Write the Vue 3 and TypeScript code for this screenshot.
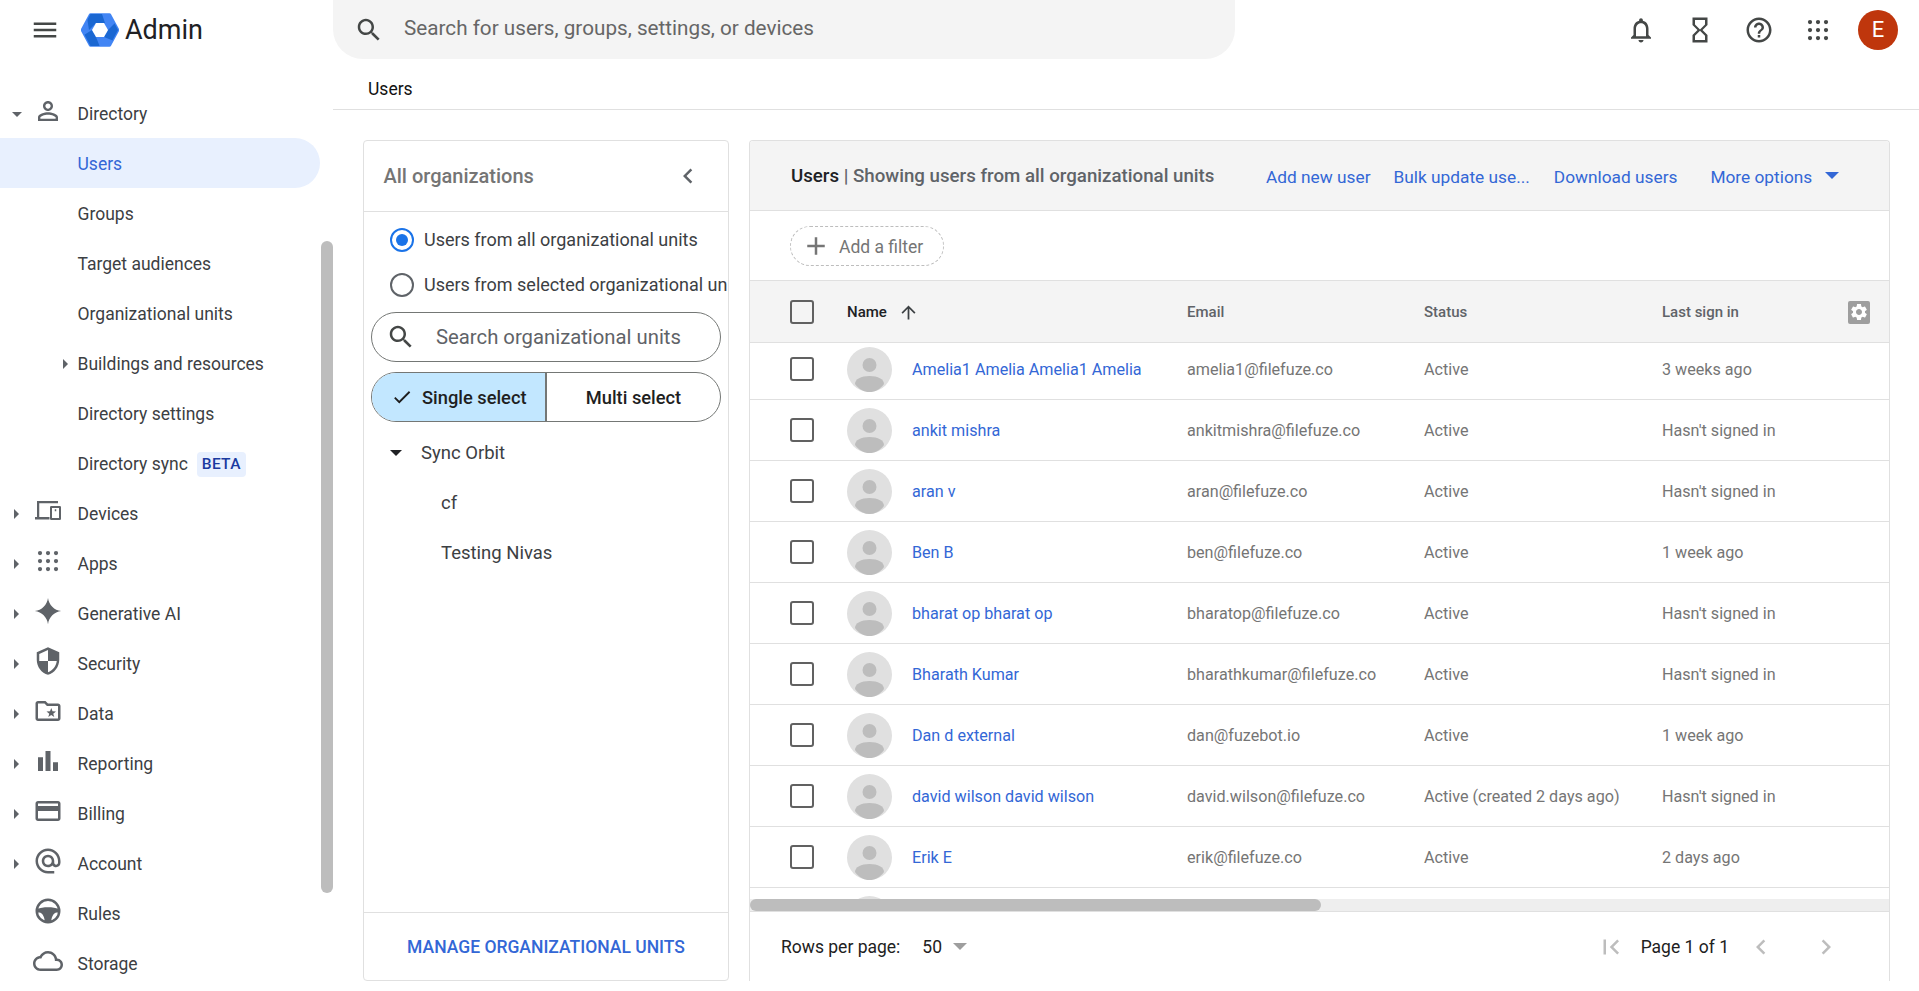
<script setup lang="ts">
const dot = (x: number, y: number, r: number) =>
  `M${x - r} ${y}a${r} ${r} 0 1 1 ${2 * r} 0a${r} ${r} 0 1 1 ${-2 * r} 0Z`
const dots = [5.6, 12, 18.4]
  .flatMap((y) => [5.6, 12, 18.4].map((x) => dot(x, y, 1.7)))
  .join('')

const paths: Record<string, string> = {
  menu: 'M3 18h18v-2H3v2zm0-5h18v-2H3v2zm0-7v2h18V6H3z',
  search:
    'M15.5 14h-.79l-.28-.27C15.41 12.59 16 11.11 16 9.5 16 5.91 13.09 3 9.5 3S3 5.91 3 9.5 5.91 16 9.5 16c1.61 0 3.09-.59 4.23-1.57l.27.28v.79l5 4.99L20.49 19l-4.99-5zm-6 0C7.01 14 5 11.99 5 9.5S7.01 5 9.5 5 14 7.01 14 9.5 11.99 14 9.5 14z',
  bell: 'M12 22c1.1 0 2-.9 2-2h-4c0 1.1.9 2 2 2zm6-6v-5c0-3.07-1.63-5.64-4.5-6.32V4c0-.83-.67-1.5-1.5-1.5s-1.5.67-1.5 1.5v.68C7.64 5.36 6 7.92 6 11v5l-2 2v1h16v-1l-2-2zm-2 1H8v-6c0-2.48 1.51-4.5 4-4.5s4 2.02 4 4.5v6z',
  hourglass:
    'M6 2v6h.01L6 8.01 10 12l-4 4 .01.01H6V22h12v-5.99h-.01L18 16l-4-4 4-3.99-.01-.01H18V2H6zm10 14.5V20H8v-3.5l4-4 4 4zm-4-5l-4-4V4h8v3.5l-4 4z',
  help: 'M11 18h2v-2h-2v2zm1-16C6.48 2 2 6.48 2 12s4.48 10 10 10 10-4.48 10-10S17.52 2 12 2zm0 18c-4.41 0-8-3.59-8-8s3.59-8 8-8 8 3.59 8 8-3.59 8-8 8zm0-14c-2.21 0-4 1.79-4 4h2c0-1.1.9-2 2-2s2 .9 2 2c0 2-3 1.75-3 5h2c0-2.25 3-2.5 3-5 0-2.21-1.79-4-4-4z',
  apps: dots,
  person:
    'M12 5.9c1.16 0 2.1.94 2.1 2.1s-.94 2.1-2.1 2.1S9.9 9.16 9.9 8s.94-2.1 2.1-2.1m0 9c2.97 0 6.1 1.46 6.1 2.1v1.1H5.9V17c0-.64 3.13-2.1 6.1-2.1M12 4C9.79 4 8 5.79 8 8s1.79 4 4 4 4-1.79 4-4-1.79-4-4-4zm0 9c-2.67 0-8 1.34-8 4v3h16v-3c0-2.66-5.33-4-8-4z',
  devices:
    'M3.2 4H20V5.8H5V16.8H13.2V18.8H1.6V16.8H3.2Z M14.6 8H21.4a1 1 0 0 1 1 1V18.2a1 1 0 0 1-1 1H14.6a1 1 0 0 1-1-1V9a1 1 0 0 1 1-1Z M15.2 9.6V17.6H20.8V9.6Z M17.4 10.6h1.2v1.5h-1.2Z',
  spark: 'M12 1.5C12.7 7 17 11.3 22.5 12 17 12.7 12.7 17 12 22.5 11.3 17 7 12.7 1.5 12 7 11.3 11.3 7 12 1.5Z',
  shield:
    'M12 1L3 5v6c0 5.55 3.84 10.74 9 12 5.16-1.26 9-6.45 9-12V5l-9-4zm0 10.99h7c-.53 4.12-3.28 7.79-7 8.94V12H5V6.3l7-3.11v8.8z',
  folder:
    'M20 6h-8l-2-2H4c-1.1 0-1.99.9-1.99 2L2 18c0 1.1.9 2 2 2h16c1.1 0 2-.9 2-2V8c0-1.1-.9-2-2-2zm0 12H4V6h5.17l2 2H20v10z M14.6 9.6l1 2.6 2.8.1-2.2 1.8.8 2.7-2.4-1.6-2.4 1.6.8-2.7-2.2-1.8 2.8-.1z',
  chart: 'M4 9h4v11H4zM10 4h4v16h-4zm6 9h4v7h-4z',
  card: 'M20 4H4c-1.11 0-1.99.89-1.99 2L2 18c0 1.11.89 2 2 2h16c1.11 0 2-.89 2-2V6c0-1.11-.89-2-2-2zm0 14H4v-6h16v6zm0-10H4V6h16v2z',
  at: 'M12 2C6.48 2 2 6.48 2 12s4.48 10 10 10h5v-2h-5c-4.34 0-8-3.66-8-8s3.66-8 8-8 8 3.66 8 8v1.43c0 .79-.71 1.57-1.5 1.57s-1.5-.78-1.5-1.57V12c0-2.76-2.24-5-5-5s-5 2.24-5 5 2.24 5 5 5c1.38 0 2.64-.56 3.54-1.47.65.89 1.77 1.47 2.96 1.47 1.97 0 3.5-1.6 3.5-3.57V12c0-5.52-4.48-10-10-10zm0 13c-1.66 0-3-1.34-3-3s1.34-3 3-3 3 1.34 3 3-1.34 3-3 3z',
  wheel:
    'M12 2a10 10 0 1 1 0 20a10 10 0 1 1 0-20Z M12 4a8 8 0 1 0 0 16a8 8 0 1 0 0-16Z M3.8 10.4C7 8.4 17 8.4 20.2 10.4V13C17 13 15 15.5 14.5 20.5H9.5C9 15.5 7 13 3.8 13Z',
  cloud:
    'M19.35 10.04C18.67 6.59 15.64 4 12 4 9.11 4 6.6 5.64 5.35 8.04 2.34 8.36 0 10.91 0 14c0 3.31 2.69 6 6 6h13c2.76 0 5-2.24 5-5 0-2.64-2.05-4.78-4.65-4.96zM19 18H6c-2.21 0-4-1.79-4-4s1.79-4 4-4h.71C7.37 7.69 9.48 6 12 6c3.04 0 5.5 2.46 5.5 5.5v.5H19c1.66 0 3 1.34 3 3s-1.34 3-3 3z',
  back: 'M15.41 7.41L14 6l-6 6 6 6 1.41-1.41L10.83 12z',
  forward: 'M8.59 16.59L13.17 12 8.59 7.41 10 6l6 6-6 6z',
  first: 'M18.41 16.59L13.82 12l4.59-4.59L17 6l-6 6 6 6zM6 6h2v12H6z',
  plus: 'M19 13h-6v6h-2v-6H5v-2h6V5h2v6h6v2z',
  up: 'M4 12l1.41 1.41L11 7.83V20h2V7.83l5.58 5.59L20 12l-8-8-8 8z',
  check: 'M9 16.17L4.83 12l-1.42 1.41L9 19 21 7l-1.41-1.41z',
  gear: 'M19.14 12.94c.04-.3.06-.61.06-.94 0-.32-.02-.64-.07-.94l2.03-1.58c.18-.14.23-.41.12-.61l-1.92-3.32c-.12-.22-.37-.29-.59-.22l-2.39.96c-.5-.38-1.03-.7-1.62-.94l-.36-2.54c-.04-.24-.24-.41-.48-.41h-3.84c-.24 0-.43.17-.47.41l-.36 2.54c-.59.24-1.13.57-1.62.94l-2.39-.96c-.22-.08-.47 0-.59.22L2.74 8.87c-.12.21-.08.47.12.61l2.03 1.58c-.05.3-.09.63-.09.94s.02.64.07.94l-2.03 1.58c-.18.14-.23.41-.12.61l1.92 3.32c.12.22.37.29.59.22l2.39-.96c.5.38 1.03.7 1.62.94l.36 2.54c.05.24.24.41.48.41h3.84c.24 0 .44-.17.47-.41l.36-2.54c.59-.24 1.13-.56 1.62-.94l2.39.96c.22.08.47 0 .59-.22l1.92-3.32c.12-.22.07-.47-.12-.61l-2.01-1.58zM12 15.6c-1.98 0-3.6-1.62-3.6-3.6s1.62-3.6 3.6-3.6 3.6 1.62 3.6 3.6-1.62 3.6-3.6 3.6z',
}

const subItems = [
  { label: 'Users', active: true },
  { label: 'Groups' },
  { label: 'Target audiences' },
  { label: 'Organizational units' },
  { label: 'Buildings and resources', caret: true },
  { label: 'Directory settings' },
  { label: 'Directory sync', beta: true },
]

const navItems = [
  { label: 'Devices', icon: 'devices', caret: true },
  { label: 'Apps', icon: 'apps', caret: true },
  { label: 'Generative AI', icon: 'spark', caret: true },
  { label: 'Security', icon: 'shield', caret: true },
  { label: 'Data', icon: 'folder', caret: true },
  { label: 'Reporting', icon: 'chart', caret: true },
  { label: 'Billing', icon: 'card', caret: true },
  { label: 'Account', icon: 'at', caret: true },
  { label: 'Rules', icon: 'wheel', caret: false },
  { label: 'Storage', icon: 'cloud', caret: false },
]

const users = [
  ['Amelia1 Amelia Amelia1 Amelia', 'amelia1@filefuze.co', 'Active', '3 weeks ago'],
  ['ankit mishra', 'ankitmishra@filefuze.co', 'Active', "Hasn't signed in"],
  ['aran v', 'aran@filefuze.co', 'Active', "Hasn't signed in"],
  ['Ben B', 'ben@filefuze.co', 'Active', '1 week ago'],
  ['bharat op bharat op', 'bharatop@filefuze.co', 'Active', "Hasn't signed in"],
  ['Bharath Kumar', 'bharathkumar@filefuze.co', 'Active', "Hasn't signed in"],
  ['Dan d external', 'dan@fuzebot.io', 'Active', '1 week ago'],
  ['david wilson david wilson', 'david.wilson@filefuze.co', 'Active (created 2 days ago)', "Hasn't signed in"],
  ['Erik E', 'erik@filefuze.co', 'Active', '2 days ago'],
  ['', '', '', ''],
]
</script>

<template>
  <div class="app">
    <header class="topbar">
      <div class="brand">
        <svg class="icon menu-icon" viewBox="0 0 24 24"><path :d="paths.menu" /></svg>
        <svg class="logo" viewBox="0 0 38 34">
          <defs>
            <clipPath id="hex"><path d="M9.5 1H28.5L37 17L28.5 33H9.5L1 17Z" stroke-linejoin="round" /></clipPath>
          </defs>
          <path d="M9.5 2H28.5L36.5 17L28.5 32H9.5L1.5 17Z" fill="#4285f4" stroke="#4285f4" stroke-width="3.5" stroke-linejoin="round" />
          <g clip-path="url(#hex)" fill="#1a67d2">
            <path d="M5 -2H20L24 10H15L8 17Z" />
            <path d="M38 6L40 17L33 28L23 24L27 17Z" />
            <path d="M0 24L11 17L15 24L19 34L9 36Z" />
          </g>
          <path d="M15 10H23L27 17L23 24H15L11 17Z" fill="#fff" />
        </svg>
        <span class="admin">Admin</span>
      </div>
      <div class="search">
        <svg class="icon search-icon" viewBox="0 0 24 24"><path :d="paths.search" /></svg>
        <span>Search for users, groups, settings, or devices</span>
      </div>
      <div class="top-actions">
        <svg class="icon" viewBox="0 0 24 24"><path :d="paths.bell" /></svg>
        <svg class="icon" viewBox="0 0 24 24"><path :d="paths.hourglass" /></svg>
        <svg class="icon" viewBox="0 0 24 24"><path :d="paths.help" /></svg>
        <svg class="icon" viewBox="0 0 24 24"><path :d="paths.apps" /></svg>
        <div class="account">E</div>
      </div>
    </header>

    <div class="body">
      <aside class="sidebar">
        <nav class="nav">
          <div class="nav-row">
            <span class="caret-slot"><i class="tri-down"></i></span>
            <svg class="nav-icon" viewBox="0 0 24 24"><path :d="paths.person" /></svg>
            <span>Directory</span>
          </div>
          <div
            v-for="item in subItems"
            :key="item.label"
            class="nav-row sub"
            :class="{ active: item.active }"
          >
            <span class="sub-slot"><i v-if="item.caret" class="tri-right"></i></span>
            <span>{{ item.label }}</span>
            <span v-if="item.beta" class="beta">BETA</span>
          </div>
          <div v-for="item in navItems" :key="item.label" class="nav-row">
            <span class="caret-slot"><i v-if="item.caret" class="tri-right"></i></span>
            <svg class="nav-icon" viewBox="0 0 24 24"><path :d="paths[item.icon]" /></svg>
            <span>{{ item.label }}</span>
          </div>
        </nav>
        <div class="side-scroll"></div>
      </aside>

      <main class="main">
        <div class="crumb">Users</div>
        <div class="content">
          <section class="org">
            <div class="org-head">
              <span>All organizations</span>
              <svg class="icon chevron" viewBox="0 0 24 24"><path :d="paths.back" /></svg>
            </div>
            <div class="org-body">
              <label class="radio-row first">
                <span class="radio on"></span>
                <span>Users from all organizational units</span>
              </label>
              <label class="radio-row">
                <span class="radio"></span>
                <span>Users from selected organizational units</span>
              </label>
              <div class="org-search">
                <svg class="icon" viewBox="0 0 24 24"><path :d="paths.search" /></svg>
                <span>Search organizational units</span>
              </div>
              <div class="toggle">
                <div class="toggle-on">
                  <svg class="check" viewBox="0 0 24 24"><path :d="paths.check" /></svg>
                  <span>Single select</span>
                </div>
                <div class="toggle-off">Multi select</div>
              </div>
              <div class="tree-row root"><i class="tri-down dark"></i><span>Sync Orbit</span></div>
              <div class="tree-row">cf</div>
              <div class="tree-row">Testing Nivas</div>
            </div>
            <div class="org-foot">MANAGE ORGANIZATIONAL UNITS</div>
          </section>

          <section class="panel">
            <div class="panel-head">
              <div class="panel-title"><b>Users</b> | Showing users from all organizational units</div>
              <a class="link l-add">Add new user</a>
              <a class="link l-bulk">Bulk update use...</a>
              <a class="link l-down">Download users</a>
              <a class="link l-more">More options</a>
              <i class="tri-blue"></i>
            </div>
            <div class="filter-bar">
              <div class="chip">
                <svg class="icon" viewBox="0 0 24 24"><path :d="paths.plus" /></svg>
                <span class="chip-text">Add a filter</span>
              </div>
            </div>
            <div class="table-grid table-head">
              <div class="cb-cell"><span class="cb"></span></div>
              <div class="name-head">
                <span class="strong">Name</span>
                <svg class="sort" viewBox="0 0 24 24"><path :d="paths.up" /></svg>
              </div>
              <div>Email</div>
              <div>Status</div>
              <div class="last-head">
                <span>Last sign in</span>
                <span class="gear"><svg viewBox="0 0 24 24"><path :d="paths.gear" /></svg></span>
              </div>
            </div>
            <div class="table-body">
              <div class="rows">
                <div v-for="(u, i) in users" :key="i" class="table-grid row">
                  <div class="cb-cell"><span class="cb"></span></div>
                  <svg class="avatar" viewBox="0 0 45 45">
                    <circle cx="22.5" cy="22.5" r="22.5" fill="#e0e0e0" />
                    <circle cx="22.5" cy="18" r="7" fill="#bdbdbd" />
                    <path d="M8 37C8 32 14 29 22.5 29S37 32 37 37C33 42.5 28 45 22.5 45S12 42.5 8 37Z" fill="#bdbdbd" />
                  </svg>
                  <a class="name">{{ u[0] }}</a>
                  <div>{{ u[1] }}</div>
                  <div>{{ u[2] }}</div>
                  <div>{{ u[3] }}</div>
                </div>
              </div>
            </div>
            <div class="hscroll"><div class="hthumb"></div></div>
            <div class="pager">
              <span>Rows per page:</span>
              <span class="rows-num">50</span>
              <i class="tri-grey"></i>
              <svg class="icon pg pg-first" viewBox="0 0 24 24"><path :d="paths.first" /></svg>
              <span class="page-text">Page 1 of 1</span>
              <svg class="icon pg pg-prev" viewBox="0 0 24 24"><path :d="paths.back" /></svg>
              <svg class="icon pg pg-next" viewBox="0 0 24 24"><path :d="paths.forward" /></svg>
            </div>
          </section>
        </div>
      </main>
    </div>
  </div>
</template>

<style>
html, body { margin: 0; overflow: hidden; background: #fff; }
</style>

<style scoped>
.app {
  width: 1919px;
  height: 991px;
  display: flex;
  flex-direction: column;
  overflow: hidden;
  font-family: Roboto, "Liberation Sans", sans-serif;
  font-size: 17.5px;
  color: #3c4043;
  background: #fff;
}
i { display: block; font-style: normal; }
.icon { width: 30px; height: 30px; flex: none; fill: #444746; display: block; }

/* top bar */
.topbar { height: 59px; flex: none; display: flex; align-items: center; }
.brand { width: 333px; flex: none; display: flex; align-items: center; padding-left: 30px; box-sizing: border-box; }
.logo { width: 38px; height: 34px; margin-left: 21px; flex: none; }
.admin { font-size: 27px; color: #202124; margin-left: 6px; }
.search {
  width: 902px; height: 59px; flex: none; background: #f4f4f4;
  border-radius: 0 0 30px 30px; display: flex; align-items: center; gap: 20px;
  padding: 0 0 3px 21px; box-sizing: border-box; color: #666; font-size: 20.7px;
}
.search-icon { margin-top: 3px; }
.top-actions { margin-left: auto; display: flex; align-items: center; gap: 29px; padding-right: 21px; }
.account {
  width: 40px; height: 40px; border-radius: 50%; background: #bf360c; color: #fff;
  display: flex; align-items: center; justify-content: center; font-size: 22px; margin-left: -4px;
}

/* sidebar */
.body { flex: 1; display: flex; min-height: 0; }
.sidebar { width: 333px; flex: none; display: flex; }
.nav { width: 321px; flex: none; padding-top: 29px; }
.nav-row { height: 50px; box-sizing: border-box; padding-top: 2px; display: flex; align-items: center; white-space: nowrap; }
.caret-slot { width: 33px; display: flex; justify-content: center; flex: none; }
.nav-icon { width: 30px; height: 30px; flex: none; fill: #5f6368; margin: 0 14.5px 6px 0; display: block; }
.sub-slot { width: 77.5px; flex: none; display: flex; justify-content: flex-end; padding-right: 9.5px; box-sizing: border-box; }
.sub.active { background: #e8f0fe; color: #3367d6; border-radius: 0 25px 25px 0; width: 320px; }
.beta {
  margin-left: 9px; background: #e8f0fe; color: #1a3aa0; font-size: 15.5px; font-weight: 500;
  padding: 3px 5px; border-radius: 4px; letter-spacing: .3px; line-height: 19px;
}
.tri-right { width: 0; height: 0; border: 5px solid transparent; border-left-color: #5f6368; border-right: 0; }
.tri-down { width: 0; height: 0; border: 5px solid transparent; border-top-color: #5f6368; border-bottom: 0; }
.tri-down.dark { border-top-color: #202124; border-width: 6px 6px 0; }
.side-scroll { width: 12px; height: 652px; margin-top: 182px; background: #bdbdbd; border-radius: 6px; flex: none; }

/* main */
.main { flex: 1; min-width: 0; display: flex; flex-direction: column; }
.crumb {
  height: 40px; padding: 10px 0 0 35px; flex: none; border-bottom: 1px solid #e0e0e0;
  display: flex; align-items: center; color: #111;
}
.content { height: 841px; margin-top: 30px; flex: none; display: flex; gap: 20px; padding: 0 29px 0 30px; }

.org {
  width: 366px; flex: none; box-sizing: border-box; border: 1px solid #e0e0e0; border-radius: 4px;
  display: flex; flex-direction: column; overflow: hidden;
}
.org-head {
  height: 71px; flex: none; box-sizing: border-box; border-bottom: 1px solid #e0e0e0;
  display: flex; align-items: center; justify-content: space-between; padding: 0 25px 0 19.5px;
  font-size: 20px; font-weight: 500; color: #757575;
}
.chevron { fill: #5f6368; }
.org-body { flex: 1; min-height: 0; white-space: nowrap; padding-left: 7px; }
.radio-row { display: flex; align-items: center; height: 45px; padding-left: 19px; gap: 10px; font-size: 18px; color: #3c4043; }
.radio-row.first { margin-top: 5px; }
.radio { width: 20px; height: 20px; border: 2px solid #5f6368; border-radius: 50%; flex: none; display: flex; align-items: center; justify-content: center; }
.radio.on { border-color: #1a73e8; }
.radio.on::after { content: ""; width: 12px; height: 12px; border-radius: 50%; background: #1a73e8; }
.org-search {
  width: 350px; height: 50px; box-sizing: border-box; border: 1px solid #747775; border-radius: 25px;
  display: flex; align-items: center; gap: 20px; padding: 0 0 1px 14px; margin-top: 5px;
  color: #5f6368; font-size: 20.3px;
}
.toggle {
  width: 350px; height: 50px; box-sizing: border-box; border: 1px solid #747775; border-radius: 25px;
  display: flex; overflow: hidden; margin-top: 10px; font-weight: 500; color: #1f1f1f; font-size: 18.3px;
}
.toggle-on {
  width: 175px; flex: none; box-sizing: border-box; background: #c2e7ff; border-right: 2px solid #747775;
  display: flex; align-items: center; gap: 9px; padding-left: 19px;
}
.check { width: 22px; height: 22px; fill: #1f1f1f; }
.toggle-off { flex: 1; display: flex; align-items: center; justify-content: center; }
.tree-row { height: 50px; display: flex; align-items: center; padding-left: 70px; font-size: 18.5px; }
.tree-row.root { padding-left: 19px; gap: 19px; margin-top: 6px; }
.org-foot {
  height: 68px; flex: none; box-sizing: border-box; border-top: 1px solid #e0e0e0;
  display: flex; align-items: center; justify-content: center; padding-top: 1px;
  font-weight: 500; color: #3367d6;
}

.panel {
  flex: 1; min-width: 0; box-sizing: border-box; border: 1px solid #e0e0e0; border-bottom: 0;
  border-radius: 4px 4px 0 0; display: flex; flex-direction: column; overflow: hidden;
}
.panel-head {
  height: 70px; flex: none; box-sizing: border-box; background: #f4f4f4; border-bottom: 1px solid #e0e0e0;
  display: flex; align-items: center; padding-left: 41px; white-space: nowrap;
}
.panel-title { width: 475px; flex: none; font-size: 18.7px; font-weight: 500; color: #5f6368; }
.panel-title b { font-weight: 500; color: #202124; }
.link { color: #3367d6; font-size: 17.3px; padding-top: 2px; }
.l-bulk { margin-left: 23px; }
.l-down { margin-left: 24px; }
.l-more { margin-left: 33px; }
.tri-blue { width: 0; height: 0; border-style: solid; border-color: #3367d6 transparent transparent; border-width: 7px 7px 0; margin-left: 13px; }
.filter-bar { height: 70px; flex: none; box-sizing: border-box; border-bottom: 1px solid #e0e0e0; display: flex; align-items: center; padding-left: 40px; }
.chip {
  width: 154px; height: 40px; box-sizing: border-box; border: 1px dashed #bdbdbd; border-radius: 20px;
  display: flex; align-items: center; gap: 8px; padding-left: 10px; color: #757575;
}
.chip .icon { fill: #757575; }
.chip-text { padding-top: 2px; }

.table-grid {
  display: grid;
  grid-template-columns: 97px 65px 275px 237px 238px 1fr;
  align-items: center;
}
.table-head {
  height: 62px; padding-top: 1px; flex: none; box-sizing: border-box; background: #f4f4f4; border-bottom: 1px solid #e0e0e0;
  font-size: 15px; font-weight: 500; color: #5f6368;
}
.name-head { grid-column: 2 / 4; display: flex; align-items: center; gap: 11px; }
.strong { color: #202124; }
.sort { width: 21px; height: 21px; fill: #3c4043; }
.last-head { display: flex; align-items: center; justify-content: space-between; padding-right: 19px; }
.gear { width: 22px; height: 23px; background: #9e9e9e; border-radius: 2px; display: flex; align-items: center; justify-content: center; }
.gear svg { width: 20px; height: 20px; fill: #fff; display: block; }
.cb-cell { padding-left: 40px; display: flex; }
.cb { width: 24px; height: 24px; box-sizing: border-box; border: 2px solid #616161; border-radius: 3px; display: block; }
.table-body { flex: 1; min-height: 0; overflow: hidden; }
.rows { margin-top: -4px; }
.row { height: 61px; box-sizing: border-box; border-bottom: 1px solid #e0e0e0; font-size: 16.15px; color: #757575; white-space: nowrap; }
.avatar { width: 45px; height: 45px; display: block; }
.name { color: #3367d6; }
.hscroll { height: 12px; flex: none; background: #eee; }
.hthumb { width: 571px; height: 12px; background: #bdbdbd; border-radius: 6px; }
.pager {
  height: 70px; flex: none; box-sizing: border-box; border-top: 1px solid #e0e0e0;
  display: flex; align-items: center; padding-left: 31px; color: #212121;
}
.rows-num { margin-left: 22px; }
.tri-grey { width: 0; height: 0; border-style: solid; border-color: #9e9e9e transparent transparent; border-width: 7px 7px 0; margin-left: 11px; }
.pg { fill: #bdbdbd; }
.pg-first { margin-left: auto; }
.page-text { margin-left: 15px; }
.pg-prev { margin-left: 17px; }
.pg-next { margin-left: 35px; margin-right: 48px; }
</style>
